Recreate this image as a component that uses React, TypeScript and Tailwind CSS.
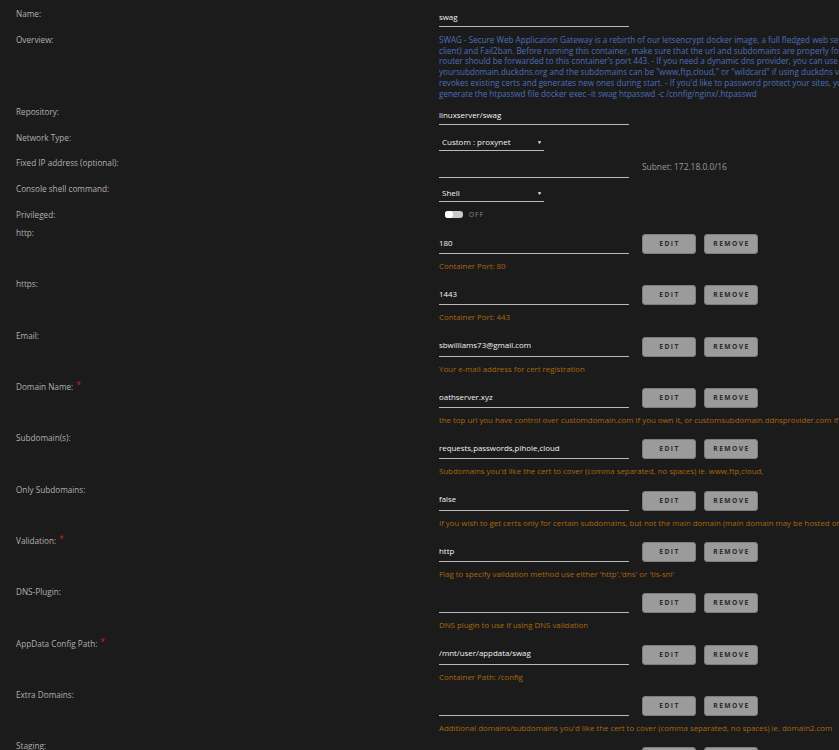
import React from "react";

type Field = {
  label: string;
  required?: boolean;
  value: string;
  help: string;
};

const fields: Field[] = [
  { label: "http:", value: "180", help: "Container Port: 80" },
  { label: "https:", value: "1443", help: "Container Port: 443" },
  { label: "Email:", value: "sbwilliams73@gmail.com", help: "Your e-mail address for cert registration" },
  {
    label: "Domain Name:",
    required: true,
    value: "oathserver.xyz",
    help: "the top url you have control over customdomain.com if you own it, or customsubdomain.ddnsprovider.com if dynamic dns",
  },
  {
    label: "Subdomain(s):",
    value: "requests,passwords,pihole,cloud",
    help: "Subdomains you'd like the cert to cover (comma separated, no spaces) ie. www,ftp,cloud,",
  },
  {
    label: "Only Subdomains:",
    value: "false",
    help: "If you wish to get certs only for certain subdomains, but not the main domain (main domain may be hosted on another machine and cannot be validated)",
  },
  {
    label: "Validation:",
    required: true,
    value: "http",
    help: "Flag to specify validation method use either 'http','dns' or 'tls-sni'",
  },
  { label: "DNS-Plugin:", value: "", help: "DNS plugin to use if using DNS validation" },
  { label: "AppData Config Path:", required: true, value: "/mnt/user/appdata/swag", help: "Container Path: /config" },
  {
    label: "Extra Domains:",
    value: "",
    help: "Additional domains/subdomains you'd like the cert to cover (comma separated, no spaces) ie. domain2.com",
  },
  {
    label: "Staging:",
    value: "false",
    help: "Set to true to retrieve certs in staging mode. Rate limits will be much higher, but the resulting cert will not pass the browser's security test.",
  },
];

const overview = [
  "SWAG - Secure Web Application Gateway is a rebirth of our letsencrypt docker image, a full fledged web server and reverse proxy with Nginx, PHP7, Certbot (Let's Encrypt",
  "client) and Fail2ban. Before running this container, make sure that the url and subdomains are properly forwarded to this container's host, and that port 443 on your",
  "router should be forwarded to this container's port 443. - If you need a dynamic dns provider, you can use the free provider duckdns.org where the url will be",
  "yoursubdomain.duckdns.org and the subdomains can be \"www,ftp,cloud,\" or \"wildcard\" if using duckdns validation. - If you change any of the parameters, the container",
  "revokes existing certs and generates new ones during start. - If you'd like to password protect your sites, you can use htpasswd. Run the following command on your host to",
  "generate the htpasswd file docker exec -it swag htpasswd -c /config/nginx/.htpasswd",
];

function Label({ text, required }: { text: string; required?: boolean }) {
  return (
    <div className="whitespace-nowrap text-[8.2px] leading-[10px] text-[#b0b0b0]">
      {text}
      {required && <span className="relative -top-[2px] ml-[3px] text-[#d41b1b]">*</span>}
    </div>
  );
}

function TextInput({ value, className }: { value: string; className: string }) {
  return (
    <div
      className={`flex w-[190px] shrink-0 items-center border-b border-[#b9b9b9] text-[7.9px] text-[#f2f2f2] ${className}`}
    >
      {value}
    </div>
  );
}

function Select({ value }: { value: string }) {
  return (
    <div className="mt-px flex h-[17px] w-[105px] items-center justify-between border-b border-[#b9b9b9] pl-[3px] pr-[2px] text-[8px] text-[#f2f2f2]">
      <span>{value}</span>
      <span className="text-[5px] leading-none">▼</span>
    </div>
  );
}

function Button({ children }: { children: React.ReactNode }) {
  return (
    <button className="flex h-[20px] w-[54px] items-center justify-center rounded-[3px] border border-[#7d7d7d] bg-[#9b9b9b] pl-[1px] text-[6.7px] font-bold tracking-[1.4px] text-[#2c2c2c]">
      {children}
    </button>
  );
}

function ConfigRow({ field }: { field: Field }) {
  return (
    <div className="grid h-[51.33px] grid-cols-[423px_1fr]">
      <Label text={field.label} required={field.required} />
      <div className="pt-[6px]">
        <div className="flex items-center gap-[13px]">
          <TextInput value={field.value} className="h-[20px]" />
          <div className="flex gap-[8px]">
            <Button>EDIT</Button>
            <Button>REMOVE</Button>
          </div>
        </div>
        <div className="mt-[7px] whitespace-nowrap text-[7.85px] leading-[10px] text-[#a9660b]">{field.help}</div>
      </div>
    </div>
  );
}

export default function App() {
  return (
    <div className="h-screen w-full overflow-hidden bg-[#1c1b1b] pl-[16px] pt-[9px] font-['Open_Sans',sans-serif] text-[8px]">
      {/* Name */}
      <div className="grid h-[26px] grid-cols-[423px_1fr]">
        <Label text="Name:" />
        <TextInput value="swag" className="mt-px h-[17px]" />
      </div>

      {/* Overview */}
      <div className="grid h-[72px] grid-cols-[423px_1fr]">
        <Label text="Overview:" />
        <div className="overflow-hidden text-[8.1px] leading-[10.7px] text-[#4a6fbd]">
          {overview.map((line) => (
            <div key={line} className="whitespace-nowrap">
              {line}
            </div>
          ))}
        </div>
      </div>

      {/* Repository */}
      <div className="grid h-[26px] grid-cols-[423px_1fr]">
        <Label text="Repository:" />
        <TextInput value="linuxserver/swag" className="mt-px h-[17px]" />
      </div>

      {/* Network type */}
      <div className="grid h-[25px] grid-cols-[423px_1fr]">
        <Label text="Network Type:" />
        <Select value="Custom : proxynet" />
      </div>

      {/* Fixed IP */}
      <div className="grid h-[26px] grid-cols-[423px_1fr]">
        <Label text="Fixed IP address (optional):" />
        <div className="flex items-start gap-[13px]">
          <TextInput value="" className="mt-px h-[19px]" />
          <span className="mt-[4px] whitespace-nowrap text-[8.4px] leading-[10px] text-[#9a9a9a]">
            Subnet: 172.18.0.0/16
          </span>
        </div>
      </div>

      {/* Console shell */}
      <div className="grid h-[26px] grid-cols-[423px_1fr]">
        <Label text="Console shell command:" />
        <Select value="Shell" />
      </div>

      {/* Privileged */}
      <div className="grid h-[18px] grid-cols-[423px_1fr]">
        <Label text="Privileged:" />
        <div className="flex items-start gap-[6px] pl-[6px]">
          <div className="mt-[1px] flex h-[7px] w-[18px] items-center rounded-[3px] bg-[#c9c9c9]">
            <div className="h-[7px] w-[8px] rounded-[3px] bg-white" />
          </div>
          <span className="mt-[-0.5px] text-[6.5px] leading-[10px] tracking-[1px] text-[#8c8c8c]">OFF</span>
        </div>
      </div>

      {fields.map((f) => (
        <ConfigRow key={f.label} field={f} />
      ))}
    </div>
  );
}
